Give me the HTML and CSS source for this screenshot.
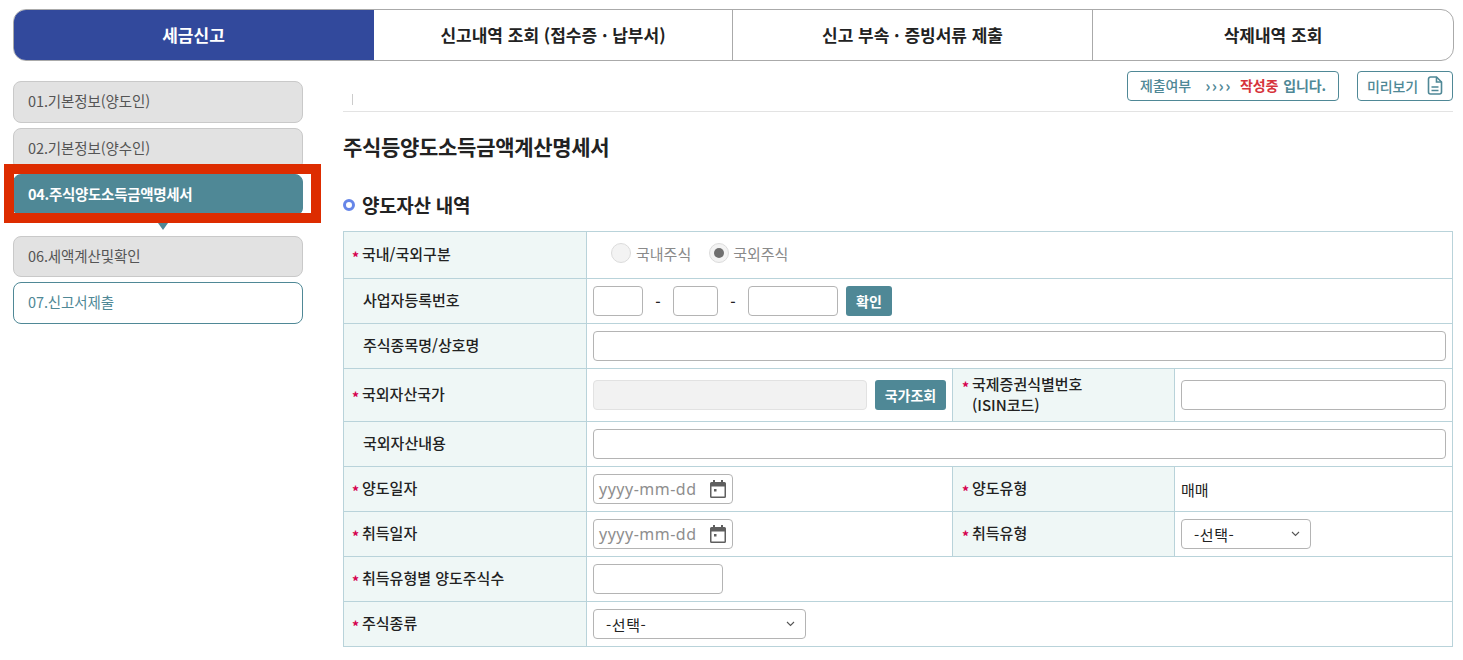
FILE: index.html
```html
<!DOCTYPE html>
<html lang="ko">
<head>
<meta charset="utf-8">
<title>세금신고</title>
<link rel="stylesheet" href="styles.css">
</head>
<body>
<nav class="tabs">
  <a class="tab tab-on">세금신고</a>
  <a class="tab tab-two">신고내역 조회 (접수증 · 납부서)</a>
  <a class="tab">신고 부속 · 증빙서류 제출</a>
  <a class="tab">삭제내역 조회</a>
</nav>
<div class="layout">
  <aside class="side">
    <a class="step">01.기본정보(양도인)</a>
    <a class="step">02.기본정보(양수인)</a>
    <a class="step step-on">04.주식양도소득금액명세서</a>
    <a class="step step-low">06.세액계산및확인</a>
    <a class="step step-next">07.신고서제출</a>
    <div class="mark"></div>
  </aside>
  <main class="main">
    <div class="topbar">
      <span class="tick"></span>
      <div class="status"><span>제출여부</span><span class="arrows">››››</span><b class="red">작성중</b><b>입니다.</b></div>
      <div class="preview"><span>미리보기</span>
        <svg class="doc" width="16" height="19" viewBox="0 0 16 19" fill="none" stroke="#4f8896" stroke-width="1.6"><path d="M1.5 3a2 2 0 0 1 2-2h6l5 5v10a2 2 0 0 1-2 2h-9a2 2 0 0 1-2-2z"/><path d="M9.5 1v5h5M4.500 11h7M4.500 14.500h7"/></svg>
      </div>
    </div>
    <h1 class="title">주식등양도소득금액계산명세서</h1>
    <h2 class="section"><span class="dot"></span>양도자산 내역</h2>
    <table class="form">
      <colgroup><col class="c1"><col class="c2"><col class="c3"><col class="c4"></colgroup>
      <tr class="r47">
        <th class="req">국내/국외구분</th>
        <td colspan="3">
          <div class="radios">
            <span class="radio"></span><span class="rlabel">국내주식</span>
            <span class="radio radio-on"></span><span class="rlabel">국외주식</span>
          </div>
        </td>
      </tr>
      <tr>
        <th class="opt">사업자등록번호</th>
        <td colspan="3">
          <div class="line">
            <span class="input w50"></span><span class="dash">-</span><span class="input w45"></span><span class="dash">-</span><span class="input w90"></span><span class="btn b46">확인</span>
          </div>
        </td>
      </tr>
      <tr>
        <th class="opt">주식종목명/상호명</th>
        <td colspan="3"><span class="input full"></span></td>
      </tr>
      <tr class="r53">
        <th class="req">국외자산국가</th>
        <td>
          <div class="line g8"><span class="input grow off"></span><span class="btn b71">국가조회</span></div>
        </td>
        <th class="req mid two">국제증권식별번호<br>(ISIN코드)</th>
        <td><span class="input full"></span></td>
      </tr>
      <tr>
        <th class="opt">국외자산내용</th>
        <td colspan="3"><span class="input full"></span></td>
      </tr>
      <tr>
        <th class="req">양도일자</th>
        <td>
          <div class="input date"><span class="ph">yyyy-mm-dd</span>
            <svg width="16" height="18" viewBox="0 0 16 18"><path fill="#5f5f5f" d="M3 0h2v2h6V0h2v2h1.5A1.5 1.5 0 0 1 16 3.500V16.500A1.500 1.500 0 0 1 14.500 18h-13A1.500 1.500 0 0 1 0 16.500V3.500A1.500 1.500 0 0 1 1.500 2H3zM1.500 6.500v10h13v-10zM4 9h2.500v2.500H4z"/></svg>
          </div>
        </td>
        <th class="req mid">양도유형</th>
        <td class="val">매매</td>
      </tr>
      <tr>
        <th class="req">취득일자</th>
        <td>
          <div class="input date"><span class="ph">yyyy-mm-dd</span>
            <svg width="16" height="18" viewBox="0 0 16 18"><path fill="#5f5f5f" d="M3 0h2v2h6V0h2v2h1.5A1.5 1.5 0 0 1 16 3.500V16.500A1.500 1.500 0 0 1 14.500 18h-13A1.500 1.500 0 0 1 0 16.500V3.500A1.500 1.500 0 0 1 1.500 2H3zM1.500 6.500v10h13v-10zM4 9h2.500v2.500H4z"/></svg>
          </div>
        </td>
        <th class="req mid">취득유형</th>
        <td>
          <div class="input select s130"><span>-선택-</span>
            <svg width="9" height="6" viewBox="0 0 9 6" fill="none" stroke="#555" stroke-width="1.100"><path d="M1 1l3.500 3.500L8 1"/></svg>
          </div>
        </td>
      </tr>
      <tr>
        <th class="req">취득유형별 양도주식수</th>
        <td colspan="3"><span class="input w130"></span></td>
      </tr>
      <tr>
        <th class="req">주식종류</th>
        <td colspan="3">
          <div class="input select s213"><span>-선택-</span>
            <svg width="9" height="6" viewBox="0 0 9 6" fill="none" stroke="#555" stroke-width="1.100"><path d="M1 1l3.500 3.500L8 1"/></svg>
          </div>
        </td>
      </tr>
    </table>
  </main>
</div>
</body>
</html>
```
FILE: styles.css
```css
* { box-sizing: border-box; }
html, body { margin: 0; padding: 0; background: #fff; overflow: hidden; }
body {
  width: 1463px;
  height: 660px;
  padding: 9px 9px 0 13px;
  font-family: "Noto Sans CJK KR", "Noto Sans", sans-serif;
  font-size: 15px;
  color: #222;
  letter-spacing: 0;
}
.tabs {
  display: flex;
  width: 1441px;
  height: 52px;
  border: 1px solid #aaa;
  border-radius: 13px;
  overflow: hidden;
}
.tab {
  flex: 0 0 360px;
  display: flex;
  align-items: center;
  justify-content: center;
  padding-bottom: 2px;
  font-size: 17px;
  font-weight: 700;
  color: #222;
  border-left: 1px solid #aaa;
}
.tab:first-child { border-left: 0; }
.tab:last-child { flex: 1; }
.tab-on { background: #32499c; color: #fff; flex-basis: 361px; margin: -1px 0 -1px -1px; }
.tab-two { flex-basis: 358px; border-left: 0; }
.layout { display: flex; gap: 40px; margin-top: 10px; }
.side {
  position: relative;
  width: 290px;
  padding-top: 10px;
  display: flex;
  flex-direction: column;
  flex: none;
}
.step {
  height: 42px;
  margin-bottom: 5px;
  padding: 0 0 4px 14px;
  display: flex;
  align-items: center;
  background: #e2e2e2;
  border: 1px solid #c9c9c9;
  border-radius: 8px;
  color: #555;
  font-size: 14.500px;
  letter-spacing: -0.1px;
}
.step-on {
  position: relative;
  height: 42px;
  margin: -1px 0 20px;
  padding-bottom: 4px;
  background: #4f8896;
  border-color: #4f8896;
  color: #fff;
  font-weight: 700;
  letter-spacing: -0.3px;
}
.step-on::after {
  content: "";
  position: absolute;
  left: 144px;
  top: 48px;
  border: 5px solid transparent;
  border-top: 7px solid #4f8896;
  border-bottom: 0;
}
.step-low { height: 41px; padding-bottom: 2px; }
.step-next { background: #fff; border-color: #4f8896; color: #4f8896; }
.mark {
  position: absolute;
  left: -9px;
  top: 93px;
  width: 317px;
  height: 59px;
  border: 10px solid #dd2c00;
  pointer-events: none;
}
.main { width: 1110px; flex: none; }
.topbar {
  position: relative;
  height: 41px;
  display: flex;
  justify-content: flex-end;
  gap: 18px;
  border-bottom: 1px solid #e3e3e3;
}
.tick {
  width: 1px;
  height: 11px;
  background: #ccc;
  margin: 23px auto 0 9px;
}
.status, .preview {
  height: 30px;
  display: flex;
  align-items: center;
  border: 1px solid #4f8896;
  border-radius: 4px;
  color: #4f8896;
  font-size: 14px;
  font-weight: 500;
  padding: 0 0 2px 12px;
  letter-spacing: -0.1px;
}
.status { width: 212px; }
.preview { width: 96px; padding: 0 9px 1px; justify-content: space-between; }
.doc { flex: none; }
.arrows { margin: 0 8px 0 14px; font-size: 16px; font-weight: 700; letter-spacing: 1.500px; }
.red { color: #d6333b; margin-right: 5px; }
.title {
  margin: 0;
  padding-top: 19px;
  font-size: 21px;
  line-height: 30px;
  font-weight: 700;
  letter-spacing: -0.3px;
  color: #222;
}
.section {
  margin: 25px 0 7px;
  height: 38px;
  display: flex;
  align-items: center;
  font-size: 19px;
  font-weight: 700;
  line-height: 26px;
  letter-spacing: -0.3px;
  color: #222;
}
.dot {
  width: 12px;
  height: 12px;
  margin-right: 7px;
  border: 3px solid #6686e8;
  border-radius: 50%;
}
.form {
  width: 1110px;
  border-collapse: collapse;
  table-layout: fixed;
  border: 1px solid #b9d3da;
}
.c1 { width: 243px; }
.c2 { width: 366px; }
.c3 { width: 222px; }
.form tr { height: 45px; }
.form .r47 { height: 47px; }
.form .r53 { height: 53px; }
.form th, .form td { border: 1px solid #b9d3da; padding: 0 6px; font-weight: 400; }
.form th {
  background: #eff7f6;
  text-align: left;
  color: #222;
  font-weight: 500;
  padding: 0 0 4px 18px;
  position: relative;
  line-height: 21px;
}
.form th.opt { padding-left: 19px; }
.form th.mid { padding-left: 19px; }
.req::before {
  content: "*";
  position: absolute;
  left: 8px;
  top: 50%;
  margin-top: -8px;
  color: #d6004f;
  font-weight: 700;
  font-size: 14px;
  line-height: 20px;
}
.mid::before { left: 9px; }
.form .two { padding-bottom: 2px; }
.two::before { top: 8px; margin-top: 0; }
.val { padding-left: 6px; }
.input {
  display: block;
  height: 30px;
  border: 1px solid #b4b4b4;
  border-radius: 4px;
  background: #fff;
}
.full { width: 100%; }
.w50 { width: 50px; }
.w45 { width: 45px; }
.w90 { width: 90px; }
.w130 { width: 130px; }
.grow { flex: 1; }
.off { background: #f2f2f2; border-color: #e2e2e2; }
.line { display: flex; align-items: center; }
.g8 { gap: 8px; }
.dash { width: 30px; text-align: center; font-weight: 500; }
.btn {
  height: 30px;
  display: flex;
  align-items: center;
  justify-content: center;
  background: #4f8896;
  color: #fff;
  border-radius: 3px;
  font-size: 14px;
  font-weight: 700;
}
.b46 { width: 46px; margin-left: 8px; }
.b71 { width: 71px; font-size: 14px; }
.radios { display: flex; align-items: center; padding: 0 0 4px 18px; }
.radio {
  width: 20px;
  height: 20px;
  border-radius: 50%;
  border: 1px solid #dcdcdc;
  background: #f3f3f3;
  margin-right: 5px;
}
.radio-on { position: relative; margin-right: 4px; }
.radio-on::after {
  content: "";
  position: absolute;
  left: 4px;
  top: 4px;
  width: 10px;
  height: 10px;
  border-radius: 50%;
  background: #6f6f6f;
}
.rlabel { color: #8a8a8a; margin-right: 18px; }
.date {
  width: 140px;
  display: flex;
  align-items: center;
  justify-content: space-between;
  padding: 0 6px 0 5px;
}
.ph { font-family: "Noto Sans", sans-serif; font-size: 16px; color: #8e8e8e; letter-spacing: 0.5px; }
.select {
  display: flex;
  align-items: center;
  justify-content: space-between;
  padding: 0 10px 0 12px;
  letter-spacing: 0.6px;
}
.s130 { width: 130px; }
.s213 { width: 213px; }
```
